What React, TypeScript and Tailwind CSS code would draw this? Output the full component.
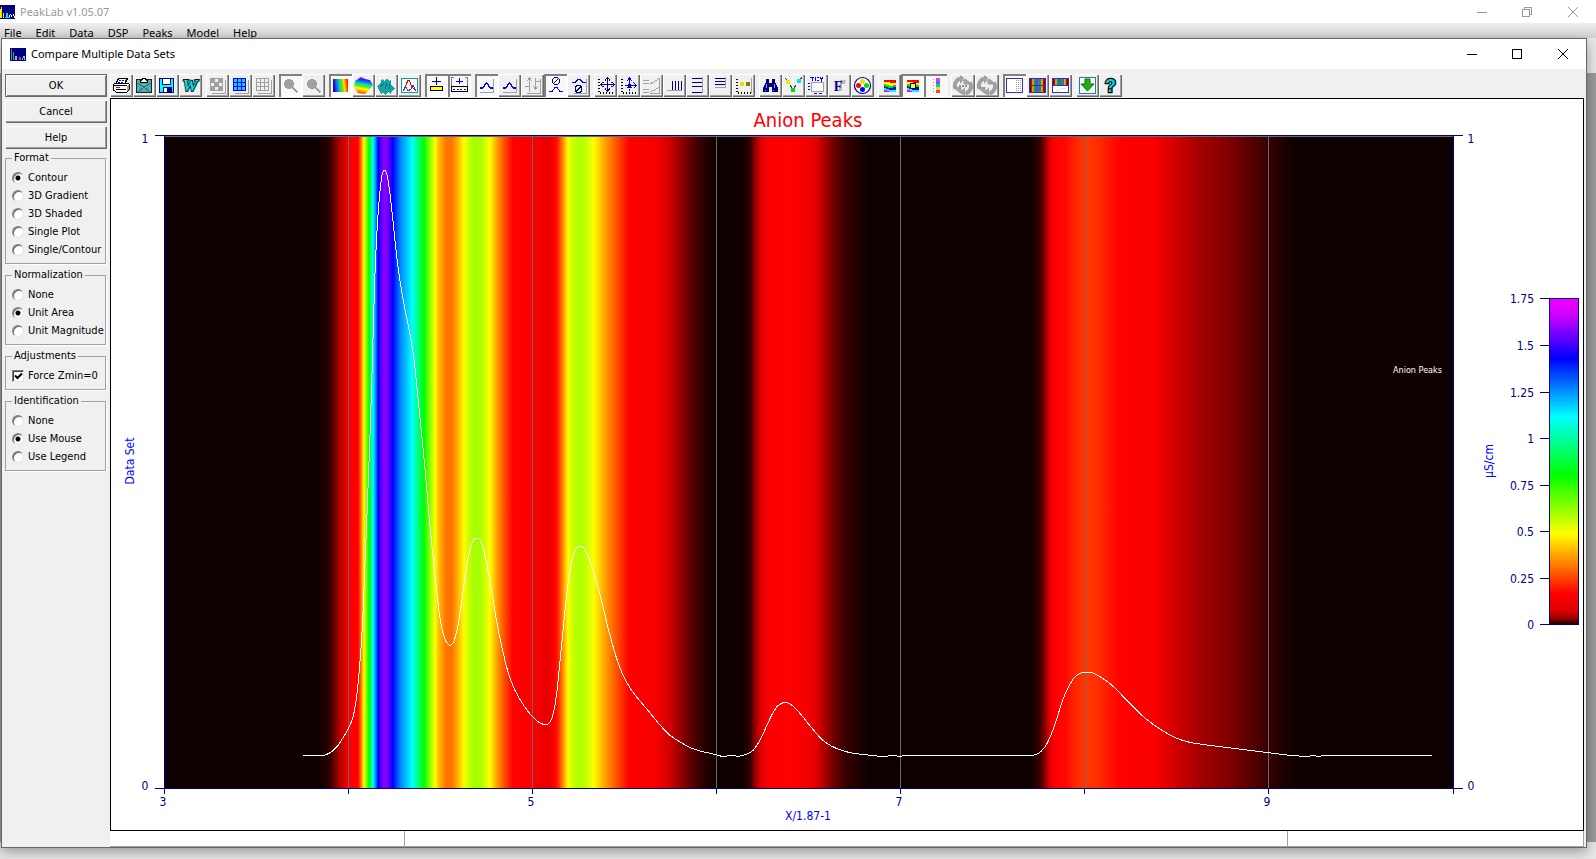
import { useState } from "react";
import type { ReactNode } from "react";

const UI_FONT = "font-['DejaVu_Sans_Condensed','DejaVu_Sans',sans-serif]";
const TITLE_FONT = "font-['Noto_Sans','Open_Sans',sans-serif]";

const NAVY = "#000080";
const BLUE = "#0000ff";
const GRAY = "#a0a0a0";

/* ---------- toolbar icons, drawn on a 23 x 23 grid ---------- */

function Peak({ y, x = 5, color = BLUE }: { y: number; x?: number; color?: string }) {
  return <path d={`M${x} ${y + 5}h3l3-5h1l3 5h3`} fill="none" stroke={color} strokeWidth="1.2" />;
}

function Frame() {
  return <path d="M5 18.500h13.500v-14" fill="none" stroke={GRAY} />;
}

function GridIcon({ line, fill, checks }: { line: string; fill: string; checks?: boolean }) {
  return (
    <>
      <rect x="4.500" y="4.500" width="12" height="12" fill={fill} stroke={line} />
      {checks && <path d="M5 5h4v4h-4zM9 9h4v4h-4zM13 5h3v4h-3zM5 13h4v3h-4zM13 13h3v3h-3z" fill="#a0a0a0" />}
      <path d="M8.500 4v13M12.500 4v13M4 8.500h13M4 12.500h13" stroke={line} />
      <path d="M6 19.500h13.500v-14" fill="none" stroke={GRAY} />
    </>
  );
}

function Magnifier() {
  return (
    <>
      <circle cx="10" cy="10" r="5" fill={GRAY} />
      <path d="M13 13l5.500 5.500" stroke={GRAY} strokeWidth="2.200" />
    </>
  );
}

function DotAxis() {
  return <path d="M4 5h1.500M4 8h1.500M4 11h1.500M4 14h1.500M4 17h1.500M6 18v2M9 18v2M12 18v2M15 18v2M18 18v2" stroke="#000" />;
}

function Refresh({ dots }: { dots?: boolean }) {
  return (
    <>
      <path d="M9 4.500a7.500 7.500 0 0 0-4.500 10M14.500 19.500a7.500 7.500 0 0 0 4.500-11" fill="none" stroke={GRAY} strokeWidth="4" />
      <path d="M9 1v9l5-5.500zM14 13.500v9l-5-4.500zM1.500 13h9v7.500zM21.500 10.500h-9v-7.500z" fill={GRAY} />
      {dots && <path d="M8 11h2v2h-2zM11 11h2v2h-2zM14 11h2v2h-2z" fill={dots ? "#909090" : GRAY} />}
    </>
  );
}

const STRIPES = ["#800000", "#e00000", "#ff8000", "#a0c000", "#00a060", "#0080a0", "#8040c0", "#a040c0", "#0090a0", "#00a040", "#c0c000", "#ff8000", "#e00000", "#800000"];

function StripeBand({ y, h }: { y: number; h: number }) {
  return (
    <>
      {STRIPES.map((c, i) => (
        <rect key={i} x={4 + i * 1.1} y={y} width="1.200" height={h} fill={c} />
      ))}
    </>
  );
}

function WavyRainbow() {
  return (
    <>
      <rect x="6" y="6" width="12" height="12" fill="#ffff00" />
      <path d="M6 6h12v3h-5l-3-1h-4z" fill="#ff0000" />
      <path d="M6 10l6 2 6-1v3l-6 1-6-2z" fill="#00e000" />
      <path d="M6 12l5 2 7-1v3l-6 0-6-2z" fill="#0000ff" />
      <path d="M6 14l6 2h6v2H6z" fill="#00ffff" />
      <path d="M6 16l5 1v1H6z" fill="#ff00ff" />
    </>
  );
}

interface Tool {
  name: string;
  pressed?: boolean;
  icon: ReactNode;
  smooth?: boolean;
}

const TOOLS: Tool[][] = [
  [
    {
      name: "Print",
      icon: (
        <>
          <path d="M8.500 4.500h9l-2.500 5H6z" fill="#fff" stroke="#000" />
          <path d="M9 6h1.500M12 6h1.500M15 6h1M8 8h1.500M11 8h1.500" stroke={BLUE} />
          <path d="M3.500 10.500l2-1.500h12l2 1.500v5l-2.500 2.500H6l-2.500-2z" fill="#fff" stroke="#000" />
          <path d="M4 11.500h12.500M6 15.500h10" stroke="#000" />
          <path d="M6 13.500h4" stroke="#ff0000" />
          <path d="M17 12l2-1v4l-2 2z" fill="#a0a0a0" />
        </>
      ),
    },
    {
      name: "Copy",
      icon: (
        <>
          <rect x="3.500" y="5.500" width="15" height="13" fill="#58acac" stroke="#202020" />
          <path d="M4 9l7 4 7-4M5 18l6-5 6 5" stroke="#108080" fill="none" />
          <path d="M7.500 8.500v-2l2-1v-1.500h3v1.500l2 1v2z" fill="#fff" stroke="#000" />
        </>
      ),
    },
    {
      name: "Save",
      icon: (
        <>
          <rect x="3.500" y="4.500" width="14" height="14" fill="#00ffff" stroke={NAVY} />
          <rect x="6.500" y="4.500" width="8" height="6" fill="#fff" stroke={NAVY} />
          <rect x="7" y="13" width="9" height="6" fill={NAVY} />
          <rect x="8" y="14" width="3" height="4" fill="#fff" />
        </>
      ),
    },
    {
      name: "Export to Word",
      smooth: true,
      icon: (
        <text x="11" y="17" textAnchor="middle" fontFamily="Liberation Serif, serif" fontWeight="bold" fontStyle="italic" fontSize="17" fill="#00e0e0" stroke="#002020" strokeWidth="2" paintOrder="stroke">
          W
        </text>
      ),
    },
  ],
  [
    { name: "Partial grid", icon: <GridIcon line={GRAY} fill="#f0f0f0" checks /> },
    { name: "Full grid", icon: <GridIcon line="#0000ff" fill="#18c8ff" /> },
    { name: "No grid", icon: <GridIcon line={GRAY} fill="#f0f0f0" /> },
  ],
  [
    { name: "Zoom in", pressed: true, icon: <Magnifier /> },
    { name: "Zoom out", icon: <Magnifier /> },
  ],
  [
    {
      name: "Contour plot",
      pressed: true,
      smooth: true,
      icon: <path d="M4 5h15v13H4z" fill="url(#rainbowAcross)" />,
    },
    {
      name: "Gradient surface",
      smooth: true,
      icon: <path d="M3 7l6-4 4 2 5 1 3 5-4 5-4 4-7-1-4-6z" fill="url(#rainbowDown)" />,
    },
    {
      name: "Shaded surface",
      icon: (
        <>
          <path d="M2 12l3-2 2-5 3 2 2-3 2 3 2-1v5l4 4-3 2-1 3-3-2-2 3-3-2-2 1-2-4z" fill="#18a4a4" />
          <path d="M6 13l3-4M10 15l2-6M14 15l1-5" stroke="#007078" fill="none" />
        </>
      ),
    },
    {
      name: "Single plot",
      icon: (
        <>
          <rect x="3.500" y="4.500" width="16" height="14" fill="#fff" stroke="#109c9c" />
          <path d="M5 17l3-6 2-5 1 0 3 7 4 4" stroke="#e00000" fill="none" />
          <path d="M5 17l3-4 2 4 3-2 2-4 3 6" stroke="#4040d0" fill="none" />
        </>
      ),
    },
  ],
  [
    {
      name: "Add marker",
      pressed: true,
      icon: (
        <>
          <path d="M11.500 3v8M7 7.500h9" stroke={NAVY} />
          <rect x="5.500" y="12.500" width="12" height="4" fill="#ffff00" stroke="#000" />
        </>
      ),
    },
    {
      name: "Add range",
      pressed: true,
      icon: (
        <>
          <path d="M6 3.500h-2.500v8M17 3.500h2.500v8" stroke="#808080" fill="none" />
          <path d="M11.500 4v6M8 7.500h7" stroke={BLUE} />
          <rect x="3.500" y="12.500" width="16" height="5" fill="#fff" stroke="#000" />
          <path d="M5 15.500h2M9 15.500h2M12 15.500h2M16 15.500h2" stroke={BLUE} />
        </>
      ),
    },
  ],
  [
    { name: "Show peak", pressed: true, icon: <><Frame /><Peak y={9} /></> },
    { name: "Show baseline", icon: <><Frame /><Peak y={9} /></> },
    {
      name: "Swap axes",
      icon: (
        <path d="M8.500 4v14M6 7l2.500-3 2.500 3M14.500 4v11M12 12l2.500 3 2.500-3M4 12.500h5M14 7.500h5M19.500 5v14H6" stroke={GRAY} fill="none" />
      ),
    },
    {
      name: "Hide above",
      pressed: true,
      icon: (
        <>
          <circle cx="12" cy="7" r="3.500" fill="none" stroke={NAVY} />
          <path d="M9.500 9.500l5-5" stroke={NAVY} />
          <path d="M5 17.500h3l3-4h2l3 4h3" stroke={BLUE} fill="none" />
        </>
      ),
    },
    {
      name: "Hide below",
      icon: (
        <>
          <path d="M5 8.500h3l3-3h2l3 3h2.500" stroke={BLUE} fill="none" />
          <circle cx="11.500" cy="15" r="3.500" fill="none" stroke={NAVY} />
          <path d="M9 17.500l5-5" stroke={NAVY} />
          <path d="M19.500 5v14H7" stroke={GRAY} fill="none" />
        </>
      ),
    },
  ],
  [
    {
      name: "Scale both axes",
      icon: (
        <>
          <DotAxis />
          <path d="M13.500 4v13M7 10.500h13M11 6.500l2.500-3 2.500 3M11 14.500l2.500 3 2.500-3M9.500 8l-3 2.500 3 2.500M17.500 8l3 2.500-3 2.500" stroke={NAVY} fill="none" />
        </>
      ),
    },
    {
      name: "Scale one axis",
      icon: (
        <>
          <DotAxis />
          <path d="M12.500 4v10M8 11.500h11M10 7l2.500-3 2.500 3M16.500 8.500l3 3-3 3M10 13.500h5M12.500 15v2" stroke={BLUE} fill="none" />
          <circle cx="12.500" cy="11.500" r="2" fill={NAVY} />
        </>
      ),
    },
    {
      name: "Axis scale",
      icon: <path d="M3 6.500h6M3 9.500h6M3 15.500h6M3 18.500h6M10 9.500l3-1 6-4M10 17.500l4-1 6-4M19.500 4v15H10" stroke={GRAY} fill="none" />,
    },
    {
      name: "Vertical lines",
      icon: (
        <>
          <path d="M4 16.500h15" stroke={GRAY} />
          <path d="M9.500 7v9M12.500 7v9M15.500 7v9M18.500 7v9" stroke={NAVY} strokeWidth="1.200" />
        </>
      ),
    },
    {
      name: "Line list",
      icon: (
        <>
          <path d="M16.500 3v16" stroke={GRAY} />
          <path d="M6 4.500h10M6 8.500h10M6 12.500h10M6 18.500h10" stroke={NAVY} />
        </>
      ),
    },
    {
      name: "Short list",
      icon: (
        <>
          <path d="M16.500 3v11M6 13.500h10" stroke={GRAY} />
          <path d="M6 4.500h10M6 7.500h10M6 10.500h10" stroke={NAVY} />
        </>
      ),
    },
    {
      name: "Data points",
      icon: (
        <>
          <DotAxis />
          <path d="M19.500 4v15" stroke={GRAY} />
          <rect x="8" y="8" width="4" height="4" fill="#e8e000" />
          <rect x="14" y="8" width="4" height="4" fill="#808000" />
        </>
      ),
    },
  ],
  [
    {
      name: "Find",
      icon: (
        <>
          <path d="M7 5h3v4h3V5h3v3l3 6v4h-6v-5h-3v5H4v-4l3-6z" fill={NAVY} />
          <path d="M7 10v4M15.500 10v4M6 16h1M14 16h1" stroke="#8098ff" />
        </>
      ),
    },
    {
      name: "Point color",
      icon: (
        <>
          <path d="M3 4.500h1M4 5.500h1M8 11l2 3M14 11l-2 3M18 6l2-3" stroke="#404040" />
          <rect x="4" y="6" width="4" height="4" fill="#e8e800" />
          <rect x="15" y="5" width="4" height="4" fill="#00e0ff" />
          <rect x="9" y="14" width="4" height="4" fill="#00e000" />
        </>
      ),
    },
    {
      name: "Titles",
      icon: (
        <>
          <path d="M6 8.500h12.500v9h-12.500z" fill="#f8f8f8" stroke={GRAY} />
          <path d="M5 3.500h4M7.500 3v4M10.500 3v4M12 3.500h2M12 6.500h2M15.500 3l1 3 1-3" stroke={BLUE} fill="none" />
          <path d="M3 9.500h2M3 12.500h2M3 15.500h2M9 19.500h3M14 19.500h3" stroke={BLUE} />
        </>
      ),
    },
    {
      name: "Fonts",
      smooth: true,
      icon: (
        <>
          <path d="M12 6h6l-1 4h-3v7h-3" fill="#b8b8c8" />
          <text x="10" y="17" textAnchor="middle" fontFamily="Liberation Serif, serif" fontWeight="bold" fontSize="14" fill={NAVY}>
            F
          </text>
        </>
      ),
    },
    {
      name: "Colors",
      smooth: true,
      icon: (
        <>
          <circle cx="11.500" cy="11.500" r="8" fill="#fff" stroke={NAVY} strokeWidth="1.200" />
          <circle cx="11.500" cy="7.500" r="2.500" fill="#e8e000" />
          <circle cx="7.500" cy="11.500" r="2.500" fill="#ff0000" />
          <circle cx="15.500" cy="11.500" r="2.500" fill="#00e000" />
          <circle cx="11.500" cy="15.500" r="2.500" fill={BLUE} />
        </>
      ),
    },
  ],
  [
    { name: "Contour colors", icon: <WavyRainbow /> },
    {
      name: "Highlight region",
      pressed: true,
      icon: (
        <>
          <WavyRainbow />
          <rect x="9.500" y="9.500" width="5" height="5" fill="#ffff00" stroke={NAVY} />
        </>
      ),
    },
    {
      name: "Color legend",
      pressed: true,
      icon: (
        <>
          <path d="M9.500 5v14" stroke={GRAY} strokeDasharray="1 2" />
          <path d="M12 4h4v3h-4z" fill="#e040e0" />
          <path d="M12 7h4v3h-4z" fill="#6060ff" />
          <path d="M12 10h4v3h-4z" fill="#20c0a0" />
          <path d="M12 13h4v3h-4z" fill="#e0e020" />
          <path d="M12 16h4v3h-4z" fill="#ff4020" />
        </>
      ),
    },
  ],
  [
    { name: "Refresh options", smooth: true, icon: <Refresh dots /> },
    { name: "Refresh", smooth: true, icon: <Refresh /> },
  ],
  [
    {
      name: "Plot only",
      pressed: true,
      icon: (
        <>
          <rect x="3.500" y="4.500" width="16" height="14" fill="#fff" stroke="#3030c0" />
          <path d="M13.500 6v12M15.500 6v12M17.500 6v12" stroke={GRAY} strokeDasharray="1 1" />
        </>
      ),
    },
    {
      name: "Two contours",
      icon: (
        <>
          <StripeBand y={5} h={6} />
          <StripeBand y={12} h={6} />
          <path d="M3.500 4.500h16v14h-16zM3 11.500h17" fill="none" stroke="#3030c0" />
        </>
      ),
    },
    {
      name: "Contour and plot",
      icon: (
        <>
          <rect x="3" y="11" width="17" height="7" fill="#fff" />
          <StripeBand y={5} h={6} />
          <path d="M3.500 4.500h16v14h-16zM3 11.500h17" fill="none" stroke="#3030c0" />
          <path d="M7 16.500h3l3-2h4" stroke="#e0e0e0" fill="none" />
        </>
      ),
    },
  ],
  [
    {
      name: "Accept",
      smooth: true,
      icon: (
        <>
          <rect x="3.500" y="3.500" width="16" height="16" fill="#f8f8f8" stroke="#2878b8" />
          <path d="M9 5h5v5h4l-6.500 7L5 10h4z" fill="#20b010" stroke="#107008" />
        </>
      ),
    },
    {
      name: "Toolbar help",
      smooth: true,
      icon: (
        <text x="11.500" y="18" textAnchor="middle" fontFamily="Liberation Sans, sans-serif" fontWeight="bold" fontSize="18" fill="#00d8e0" stroke="#000" strokeWidth="2.400" paintOrder="stroke">
          ?
        </text>
      ),
    },
  ],
];

const RAISED = "shadow-[inset_1px_1px_#fff,inset_-1px_-1px_#696969,inset_-2px_-2px_#a0a0a0]";
const SUNKEN = "shadow-[inset_2px_2px_#808080,inset_-1px_-1px_#fff]";

function Toolbar() {
  return (
    <div role="toolbar" aria-label="Graph tools" className="flex h-6 gap-1">
      <svg width="0" height="0" className="absolute" aria-hidden="true">
        <defs>
          <linearGradient id="rainbowAcross" x1="0" y1="0.100" x2="1" y2="0">
            <stop offset="0" stopColor="#2000c0" />
            <stop offset="0.200" stopColor="#2060ff" />
            <stop offset="0.400" stopColor="#00e0a0" />
            <stop offset="0.550" stopColor="#60e000" />
            <stop offset="0.700" stopColor="#ffe000" />
            <stop offset="0.850" stopColor="#ff6000" />
            <stop offset="1" stopColor="#ff0000" />
          </linearGradient>
          <linearGradient id="rainbowDown" x1="0.600" y1="0" x2="0.400" y2="1">
            <stop offset="0" stopColor="#c020ff" />
            <stop offset="0.150" stopColor="#6000ff" />
            <stop offset="0.300" stopColor="#0080ff" />
            <stop offset="0.420" stopColor="#00e0c0" />
            <stop offset="0.550" stopColor="#60e800" />
            <stop offset="0.700" stopColor="#ffff00" />
            <stop offset="1" stopColor="#ff3000" />
          </linearGradient>
        </defs>
      </svg>
      {TOOLS.map((group, g) => (
        <div key={g} className="flex">
          {group.map((tool) => (
            <button
              key={tool.name}
              type="button"
              aria-label={tool.name}
              aria-pressed={tool.pressed ?? false}
              className={`h-[23px] ${g === 9 ? "w-6" : "w-[23px]"} ${tool.pressed ? `bg-[#f8f8f8] ${SUNKEN}` : `bg-[#f0f0f0] ${RAISED}`}`}
            >
              <svg width="23" height="23" viewBox="0 0 23 23" shapeRendering={tool.smooth ? "auto" : "crispEdges"} aria-hidden="true">
                {tool.icon}
              </svg>
            </button>
          ))}
        </div>
      ))}
    </div>
  );
}

/* ---------- side panel ---------- */

function PushButton({ children, primary }: { children: ReactNode; primary?: boolean }) {
  return (
    <button
      type="button"
      className={`h-[23px] w-full bg-[#f0f0f0] text-center leading-4 ${
        primary
          ? "border border-[#696969] shadow-[inset_1px_1px_#fff,inset_-1px_-1px_#808080]"
          : RAISED
      }`}
    >
      {children}
    </button>
  );
}

function Group({ title, children }: { title: string; children: ReactNode }) {
  return (
    <fieldset className="min-w-0 border border-[#a0a0a0] py-1 pl-1.5 shadow-[1px_1px_#fff]">
      <legend className="px-0.5 leading-[14px]">{title}</legend>
      {children}
    </fieldset>
  );
}

function RadioGroup({ title, options, initial }: { title: string; options: string[]; initial: string }) {
  const [value, setValue] = useState(initial);
  return (
    <Group title={title}>
      {options.map((option) => (
        <label key={option} className="flex h-[18px] items-center gap-1 whitespace-nowrap">
          <input
            type="radio"
            name={title}
            checked={value === option}
            onChange={() => setValue(option)}
            className="size-3 shrink-0 appearance-none rounded-full border border-t-[#808080] border-r-[#e3e3e3] border-b-[#e3e3e3] border-l-[#808080] bg-white shadow-[inset_1px_1px_#696969] checked:bg-[radial-gradient(circle,#000_2px,#fff_3px)]"
          />
          {option}
        </label>
      ))}
    </Group>
  );
}

function SidePanel() {
  return (
    <aside className={`flex w-[108px] shrink-0 flex-col pt-[5px] pr-[3px] pl-[3px] text-[11px] text-black ${UI_FONT}`}>
      <div className="mb-0.5 flex flex-col gap-[3px]">
        <PushButton primary>OK</PushButton>
        <PushButton>Cancel</PushButton>
        <PushButton>Help</PushButton>
      </div>
      <div className="flex flex-col gap-1 pr-px">
        <RadioGroup title="Format" initial="Contour" options={["Contour", "3D Gradient", "3D Shaded", "Single Plot", "Single/Contour"]} />
        <RadioGroup title="Normalization" initial="Unit Area" options={["None", "Unit Area", "Unit Magnitude"]} />
        <Group title="Adjustments">
          <label className="flex h-[18px] items-center gap-1 whitespace-nowrap">
            <span className="grid size-3 shrink-0">
              <input
                type="checkbox"
                defaultChecked
                className="peer col-start-1 row-start-1 size-3 appearance-none border border-t-[#808080] border-r-[#e3e3e3] border-b-[#e3e3e3] border-l-[#808080] bg-white shadow-[inset_1px_1px_#404040]"
              />
              <svg viewBox="0 0 12 12" className="pointer-events-none invisible col-start-1 row-start-1 size-3 peer-checked:visible" aria-hidden="true">
                <path d="M3 5.500l2.500 2.500 4.500-4.500" fill="none" stroke="#000" strokeWidth="2" />
              </svg>
            </span>
            Force Zmin=0
          </label>
        </Group>
        <RadioGroup title="Identification" initial="Use Mouse" options={["None", "Use Mouse", "Use Legend"]} />
      </div>
    </aside>
  );
}

/* ---------- contour chart ---------- */

const LEFT = 164;
const RIGHT = 1453;
const TOP = 135;
const BOTTOM = 788;

const BANDS: [number, string][] = [
  [164, "#0e0000"], [319, "#0e0000"], [330, "#300000"], [337, "#900000"], [343, "#d00000"], [350, "#ff0000"],
  [358, "#ff0000"], [361, "#ff7000"], [364, "#ffff00"], [366, "#90ff00"], [369, "#00ff00"], [372, "#00ffb0"],
  [373, "#00ffff"], [376, "#0080ff"], [378, "#0000ff"], [381, "#5000ff"], [384, "#8c00ff"], [388, "#7000ff"],
  [393, "#0000ff"], [400, "#0080ff"], [412, "#00ffff"], [424, "#00ff00"], [435, "#ffff00"], [440, "#ffb000"],
  [446, "#ff7400"], [452, "#ff7400"], [458, "#ffb400"], [464, "#ffff00"], [469, "#c8ff00"], [474, "#a4ff00"],
  [480, "#a4ff00"], [490, "#ffff00"], [497, "#ffa000"], [504, "#ff5000"], [513, "#ff0000"], [532, "#fa0000"],
  [547, "#e80000"], [555, "#ff0000"], [558, "#ff2000"], [563, "#ff9000"], [568, "#ffff00"], [573, "#c8ff00"],
  [579, "#b0ff00"], [584, "#b8ff00"], [594, "#ffff00"], [603, "#ffb000"], [615, "#ff5c00"], [629, "#ff0000"],
  [656, "#f60000"], [670, "#d00000"], [683, "#880000"], [697, "#400000"], [710, "#180000"], [720, "#0e0000"],
  [742, "#0e0000"], [750, "#300000"], [755, "#900000"], [760, "#d80000"], [768, "#fa0000"], [790, "#ff0000"],
  [809, "#f40000"], [818, "#d80000"], [832, "#780000"], [845, "#380000"], [868, "#0e0000"], [1031, "#0e0000"],
  [1040, "#380000"], [1045, "#900000"], [1050, "#e00000"], [1055, "#ff0000"], [1066, "#ff0800"], [1076, "#ff2800"],
  [1086, "#ff3800"], [1096, "#ff3000"], [1121, "#ff0000"], [1155, "#f80000"], [1176, "#d00000"], [1197, "#a80000"],
  [1210, "#980000"], [1233, "#780000"], [1250, "#580000"], [1268, "#380000"], [1282, "#200000"], [1297, "#0e0000"],
  [1453, "#0e0000"],
];

const SCALE_STOPS: [number, string][] = [
  [0, "#f000ff"], [0.05, "#d000ff"], [0.184, "#0000ff"], [0.363, "#00ffff"], [0.542, "#00ff00"],
  [0.722, "#ffff00"], [0.906, "#ff0000"], [0.957, "#e00000"], [0.983, "#900000"], [1, "#100000"],
];

const TRACE: [number, number][] = [
  [303, 755.5], [323, 755.5], [330, 752.8], [336.7, 747], [343.3, 737.3], [348.3, 728.8], [352.7, 717.8],
  [355.7, 703.5], [358.3, 681], [361, 648], [363.3, 607.5], [365, 562.7], [366.7, 521.8], [368.3, 481],
  [370.7, 415.7], [372.7, 350], [374.7, 281], [377.3, 226], [380, 191], [382.3, 173.7], [384.3, 170],
  [386.7, 174], [389.3, 189], [392.7, 217.8], [396, 250], [400, 281], [405, 309.6], [410, 334], [414, 358.6],
  [417.3, 391], [421, 428], [425, 468.8], [428.3, 507.6], [432.7, 554.5], [436.7, 591], [440, 617.8],
  [443.3, 634], [446.7, 642.7], [449.7, 645.5], [452.7, 643.5], [456, 634], [459.3, 617.8], [462.7, 594.5],
  [466, 570.8], [469.3, 552.4], [472.7, 541.4], [476.3, 538], [480, 539.8], [483.3, 548.4], [487.3, 566.7],
  [491.7, 591], [496, 617.8], [501.7, 646.3], [508.3, 672.9], [515, 690.4], [523.3, 704.7], [532.3, 716.5],
  [540, 723], [546.3, 725], [550.7, 721], [554, 710.4], [556.7, 693.3], [559.3, 668], [562.7, 634],
  [565.7, 603.5], [569.3, 575], [573.3, 555.3], [576.7, 548], [580, 546], [583.3, 547.5], [588.3, 556.5],
  [595, 576], [601.7, 601.4], [608.3, 628.8], [615, 653.3], [621.7, 672], [630, 688], [638.3, 699],
  [648.3, 710.8], [660, 725], [670, 735.3], [681.7, 743], [695, 749.5], [716, 754.7], [723, 756.4],
  [731, 755.5], [738, 756.2], [745.4, 754.7], [752.3, 751], [759, 742], [766, 727.3], [772.3, 714],
  [778, 705.7], [785, 702.3], [792, 705.3], [800.5, 714], [812.6, 729], [824.6, 741.7], [838.4, 749.3],
  [852, 753], [867.7, 755], [883, 756.4], [893, 755.5], [899, 756.2], [908, 755.5], [1031, 755.5], [1038, 753.7],
  [1045, 746.7], [1050, 737.3], [1055.3, 723.3], [1059.5, 710], [1064, 696.7], [1069, 686], [1074.3, 677.7],
  [1079.4, 673.7], [1084.6, 672.3], [1091, 672.5], [1100, 676.7], [1110.4, 684], [1124, 697.3], [1145, 718],
  [1160.4, 729.3], [1176, 738], [1189.6, 742.3], [1207, 745], [1236.7, 748.7], [1255, 751], [1268, 752.7],
  [1281.7, 754.3], [1292, 755.5], [1308, 756.4], [1313, 755.5], [1319, 756.4], [1323, 755.5], [1432, 755.5],
];

/** Cubic path through every point; tangents follow the local slope, so peaks do not overshoot. */
function smoothPath(points: [number, number][]) {
  const slope = (i: number) => {
    if (i === 0 || i === points.length - 1) return 0;
    const [x0, y0] = points[i - 1];
    const [x1, y1] = points[i];
    const [x2, y2] = points[i + 1];
    const a = (y1 - y0) / (x1 - x0);
    const b = (y2 - y1) / (x2 - x1);
    return a * b <= 0 ? 0 : (2 * a * b) / (a + b);
  };
  let d = `M${points[0].join(" ")}`;
  for (let i = 1; i < points.length; i++) {
    const [x0, y0] = points[i - 1];
    const [x1, y1] = points[i];
    const third = (x1 - x0) / 3;
    d += `C${x0 + third} ${y0 + slope(i - 1) * third} ${x1 - third} ${y1 - slope(i) * third} ${x1} ${y1}`;
  }
  return d;
}

const GRID_X = [348, 532, 716, 900, 1084, 1268];
const X_TICKS: [number, string][] = [[164, "3"], [348, ""], [532, "5"], [716, ""], [900, "7"], [1084, ""], [1268, "9"], [1453, ""]];
const SCALE_TICKS: [number, string][] = [
  [298, "1.75"], [345, "1.5"], [392, "1.25"], [438, "1"], [485, "0.75"], [531, "0.5"], [578, "0.25"], [624, "0"],
];

function Chart() {
  const span = RIGHT - LEFT;
  return (
    <svg
      viewBox="111 99 1472 731"
      role="img"
      aria-label="Anion Peaks contour"
      className={`block min-h-0 w-full flex-1 border border-black bg-white ${UI_FONT}`}
      fontSize="12"
      fill={NAVY}
    >
      <defs>
        <linearGradient id="bands">
          {BANDS.map(([x, color]) => (
            <stop key={x} offset={(x - LEFT) / span} stopColor={color} />
          ))}
        </linearGradient>
        <linearGradient id="scale" x1="0" y1="0" x2="0" y2="1">
          {SCALE_STOPS.map(([offset, color]) => (
            <stop key={offset} offset={offset} stopColor={color} />
          ))}
        </linearGradient>
      </defs>

      <text x="808" y="127" textAnchor="middle" fontSize="20" fill="#ff0000">
        Anion Peaks
      </text>

      <rect x={LEFT} y={TOP} width={span} height={BOTTOM - TOP} fill="url(#bands)" />
      <g shapeRendering="crispEdges" fill="none" strokeWidth="1">
        {GRID_X.map((x) => (
          <path key={x} d={`M${x + 0.5} ${TOP}V${BOTTOM}`} stroke="#696969" />
        ))}
        <path d={`M${LEFT} ${TOP + 1.5}H${RIGHT}`} stroke="#696969" />
        <path d={smoothPath(TRACE)} stroke="#fff" />
        <path d="M155 135.500H1463M155 788.500H1463M164.500 135V789M1453.500 135V789" stroke={NAVY} />
        {X_TICKS.map(([x]) => (
          <path key={x} d={`M${x + 0.5} ${BOTTOM}v6`} stroke={NAVY} />
        ))}
      </g>

      {X_TICKS.map(([x, label]) =>
        label ? (
          <text key={x} x={x - 1} y="806" textAnchor="middle">
            {label}
          </text>
        ) : null,
      )}
      <text x="145" y="143" textAnchor="middle">1</text>
      <text x="145" y="790" textAnchor="middle">0</text>
      <text x="1471" y="143" textAnchor="middle">1</text>
      <text x="1471" y="790" textAnchor="middle">0</text>
      <text x="808" y="820" textAnchor="middle" fill={BLUE}>X/1.87-1</text>
      <text transform="translate(134 461) rotate(-90)" textAnchor="middle" fill={BLUE}>Data Set</text>
      <text transform="translate(1493 461) rotate(-90)" textAnchor="middle" fill={BLUE}>µS/cm</text>
      <text x="1442" y="373" textAnchor="end" fontSize="9" fill="#fff">Anion Peaks</text>

      <g shapeRendering="crispEdges">
        <rect x="1549.500" y="298.500" width="29" height="326" fill="url(#scale)" stroke={NAVY} />
        {SCALE_TICKS.map(([y]) => (
          <path key={y} d={`M1540 ${y + 0.5}h10`} stroke={NAVY} />
        ))}
      </g>
      {SCALE_TICKS.map(([y, label]) => (
        <text key={y} x="1534" y={y + 5} textAnchor="end">
          {label}
        </text>
      ))}
    </svg>
  );
}

/* ---------- windows ---------- */

function AppIcon() {
  return (
    <svg width="15" height="14" viewBox="0 0 15 14" shapeRendering="crispEdges" aria-hidden="true">
      <rect width="15" height="14" fill={NAVY} />
      <path d="M0.500 13V4M1.500 13V2M3.500 13V8" stroke="#f0f000" />
      <path d="M4.500 12.500h2v-4h1v4h2" stroke="#00e0ff" fill="none" />
      <path d="M9.500 10v2M10.500 9v1M11.500 10v2M13.500 9v2M14.500 11v2" stroke="#ffffff" fill="none" />
    </svg>
  );
}

function DialogIcon() {
  return (
    <svg width="16" height="13" viewBox="0 0 16 13" shapeRendering="crispEdges" aria-hidden="true">
      <rect width="16" height="13" fill={NAVY} />
      <path d="M1.500 12V1M3.500 12V4" stroke="#40a060" strokeWidth="1.500" />
      <path d="M5 12l1-4 1 4M12 12l2-4 1 4" stroke="#80c0ff" fill="none" />
      <path d="M9 11.500l1-2 1 2" stroke="#e03060" fill="none" />
    </svg>
  );
}

function WindowButtons({ restore }: { restore?: boolean }) {
  return (
    <div className="flex">
      <button type="button" aria-label="Minimize" className="grid h-5 w-[45px] place-items-center">
        <svg width="10" height="10" viewBox="0 0 10 10" shapeRendering="crispEdges">
          <path d="M0 5.500h10" stroke="currentColor" />
        </svg>
      </button>
      <button type="button" aria-label={restore ? "Restore" : "Maximize"} className="grid h-5 w-[45px] place-items-center">
        <svg width="10" height="10" viewBox="0 0 10 10" shapeRendering="crispEdges" fill="none" stroke="currentColor">
          {restore ? <path d="M.5 2.500h7v7h-7zM2.500 2.500v-2h7v7h-2" /> : <path d="M.5.5h9v9h-9z" />}
        </svg>
      </button>
      <button type="button" aria-label="Close" className="grid h-5 w-[47px] place-items-center">
        <svg width="10" height="10" viewBox="0 0 10 10" stroke="currentColor">
          <path d="M0 0l10 10M10 0L0 10" />
        </svg>
      </button>
    </div>
  );
}

const MENUS = ["File", "Edit", "Data", "DSP", "Peaks", "Model", "Help"];

export default function App() {
  return (
    <div className={`flex h-screen min-h-[600px] min-w-[1180px] flex-col overflow-hidden bg-[#e8e8e8] text-[11px] ${TITLE_FONT}`}>
      <header className="flex h-[23px] shrink-0 items-center justify-between bg-white text-[#999]">
        <div className="flex items-center gap-[5px]">
          <AppIcon />
          <span className="leading-4">PeakLab v1.05.07</span>
        </div>
        <WindowButtons restore />
      </header>

      <nav aria-label="Main menu" className="flex h-[15px] shrink-0 gap-[14px] bg-linear-to-b from-[#eeeeee] to-[#d2d2d2] pl-1 text-black">
        {MENUS.map((menu) => (
          <button key={menu} type="button" className="h-5 leading-5">
            <span className="underline underline-offset-2">{menu[0]}</span>
            {menu.slice(1)}
          </button>
        ))}
      </nav>

      <div className="flex min-h-0 flex-1 bg-[linear-gradient(to_bottom,#e8e8e8_35px,#9c9c9c_35px,#9c9c9c_calc(100%-17px),#e8e8e8_calc(100%-17px))] pr-[9px] pb-[11px] pl-px">
        <section
          role="dialog"
          aria-label="Compare Multiple Data Sets"
          className="flex min-w-0 flex-1 flex-col border border-[#666] bg-[#f0f0f0] shadow-[0_4px_12px_rgba(0,0,0,0.35)]"
        >
          <div className="flex h-[30px] shrink-0 items-center justify-between bg-white pl-2 text-black">
            <div className="flex items-center gap-[5px]">
              <DialogIcon />
              <h1 className="leading-4">Compare Multiple Data Sets</h1>
            </div>
            <WindowButtons />
          </div>

          <div className="flex min-h-0 flex-1">
            <SidePanel />
            <main className="flex min-w-0 flex-1 flex-col pt-[5px] pr-0.5">
              <Toolbar />
              <Chart />
              <footer className="flex h-4 shrink-0 border-r border-b border-[#a0a0a0] bg-white">
                <div className="w-[20%] border-r border-[#a0a0a0]" />
                <div className="w-[60%] border-r border-[#a0a0a0]" />
              </footer>
            </main>
          </div>
        </section>
      </div>
    </div>
  );
}
